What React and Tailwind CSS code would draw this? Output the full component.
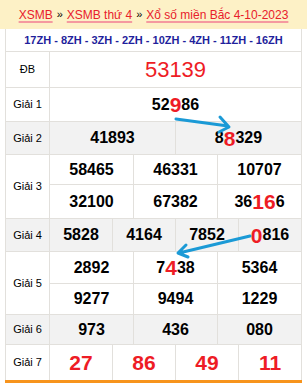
import React from "react";

const RED = "text-[#ee1c25]";

const Cell = ({ children, className = "" }) => (
  <div
    className={`flex-1 flex items-center justify-center border-l border-[#e2e0dc] ${className}`}
  >
    {children}
  </div>
);

const Hi = ({ children }) => (
  <span className={`${RED} text-[21px] leading-none`}>{children}</span>
);

const Row = ({ label, h, gray, children, last }) => (
  <div
    className={`flex ${last ? "" : "border-b border-[#e2e0dc]"} ${
      gray ? "bg-[#f2f2f2]" : "bg-white"
    }`}
  >
    <div
      className="w-[43px] shrink-0 flex items-center justify-center text-[11px] text-black"
      style={{ minHeight: h }}
    >
      {label}
    </div>
    <div className="flex-1 flex flex-col">{children}</div>
  </div>
);

const Line = ({ h, children, border }) => (
  <div
    className={`flex text-[16px] font-bold text-black ${
      border ? "border-b border-[#e2e0dc]" : ""
    }`}
    style={{ height: h }}
  >
    {children}
  </div>
);

export default function App() {
  return (
    <div
      className="relative w-[307px] h-[383px] bg-white overflow-hidden"
      style={{ fontFamily: '"Liberation Sans", Arial, sans-serif' }}
    >
      {/* header */}
      <div className="h-[29px] bg-[#fdf1c6] flex items-center justify-center text-[12px] text-black whitespace-nowrap">
        <a href="#" className="text-[#e8202b] underline decoration-[#f59aa0] decoration-2 underline-offset-2">
          XSMB
        </a>
        <span className="mx-1 text-[11px]">»</span>
        <a href="#" className="text-[#e8202b] underline decoration-[#f59aa0] decoration-2 underline-offset-2">
          XSMB thứ 4
        </a>
        <span className="mx-1 text-[11px]">»</span>
        <a href="#" className="text-[#e8202b] underline decoration-[#f59aa0] decoration-2 underline-offset-2">
          Xổ số miền Bắc 4-10-2023
        </a>
      </div>

      <div className="mx-[5px] border-x border-[#e2e0dc]">
        <div className="h-[23px] flex items-center justify-center border-b border-[#e2e0dc] text-[11px] font-bold text-[#1f1f9c] whitespace-nowrap">
          17ZH - 8ZH - 3ZH - 2ZH - 10ZH - 4ZH - 11ZH - 16ZH
        </div>

        <Row label="ĐB" h={35}>
          <Line h={35}>
            <Cell>
              <span className={`${RED} text-[22px] font-normal`}>53139</span>
            </Cell>
          </Line>
        </Row>

        <Row label="Giải 1" h={33}>
          <Line h={33}>
            <Cell>
              52<Hi>9</Hi>86
            </Cell>
          </Line>
        </Row>

        <Row label="Giải 2" h={32} gray>
          <Line h={32}>
            <Cell>41893</Cell>
            <Cell>
              8<Hi>8</Hi>329
            </Cell>
          </Line>
        </Row>

        <Row label="Giải 3" h={63}>
          <Line h={30} border>
            <Cell>58465</Cell>
            <Cell>46331</Cell>
            <Cell>10707</Cell>
          </Line>
          <Line h={33}>
            <Cell>32100</Cell>
            <Cell>67382</Cell>
            <Cell>
              36<Hi>16</Hi>6
            </Cell>
          </Line>
        </Row>

        <Row label="Giải 4" h={32} gray>
          <Line h={32}>
            <Cell>5828</Cell>
            <Cell>4164</Cell>
            <Cell>7852</Cell>
            <Cell>
              <Hi>0</Hi>816
            </Cell>
          </Line>
        </Row>

        <Row label="Giải 5" h={62}>
          <Line h={32} border>
            <Cell>2892</Cell>
            <Cell>
              7<Hi>4</Hi>38
            </Cell>
            <Cell>5364</Cell>
          </Line>
          <Line h={30}>
            <Cell>9277</Cell>
            <Cell>9494</Cell>
            <Cell>1229</Cell>
          </Line>
        </Row>

        <Row label="Giải 6" h={29} gray>
          <Line h={29}>
            <Cell>973</Cell>
            <Cell>436</Cell>
            <Cell>080</Cell>
          </Line>
        </Row>

        <Row label="Giải 7" h={35} last>
          <Line h={35}>
            <Cell>
              <span className={`${RED} text-[21px]`}>27</span>
            </Cell>
            <Cell>
              <span className={`${RED} text-[21px]`}>86</span>
            </Cell>
            <Cell>
              <span className={`${RED} text-[21px]`}>49</span>
            </Cell>
            <Cell>
              <span className={`${RED} text-[21px]`}>11</span>
            </Cell>
          </Line>
        </Row>
      </div>
      <div className="mx-[5px] h-[3px] bg-[#f7941d]" />

      {/* arrows drawn over the table */}
      <svg
        className="absolute inset-0 pointer-events-none"
        width="307"
        height="383"
        viewBox="0 0 307 383"
      >
        <g stroke="#1b9ad6" strokeWidth="3" strokeLinecap="round" strokeLinejoin="round" fill="none">
          <path d="M176 119 L228 126 M220 117 L229 127 L219 132" />
          <path d="M250 236 L179 253 M186 245 L178 253 L188 257" />
        </g>
      </svg>
    </div>
  );
}
